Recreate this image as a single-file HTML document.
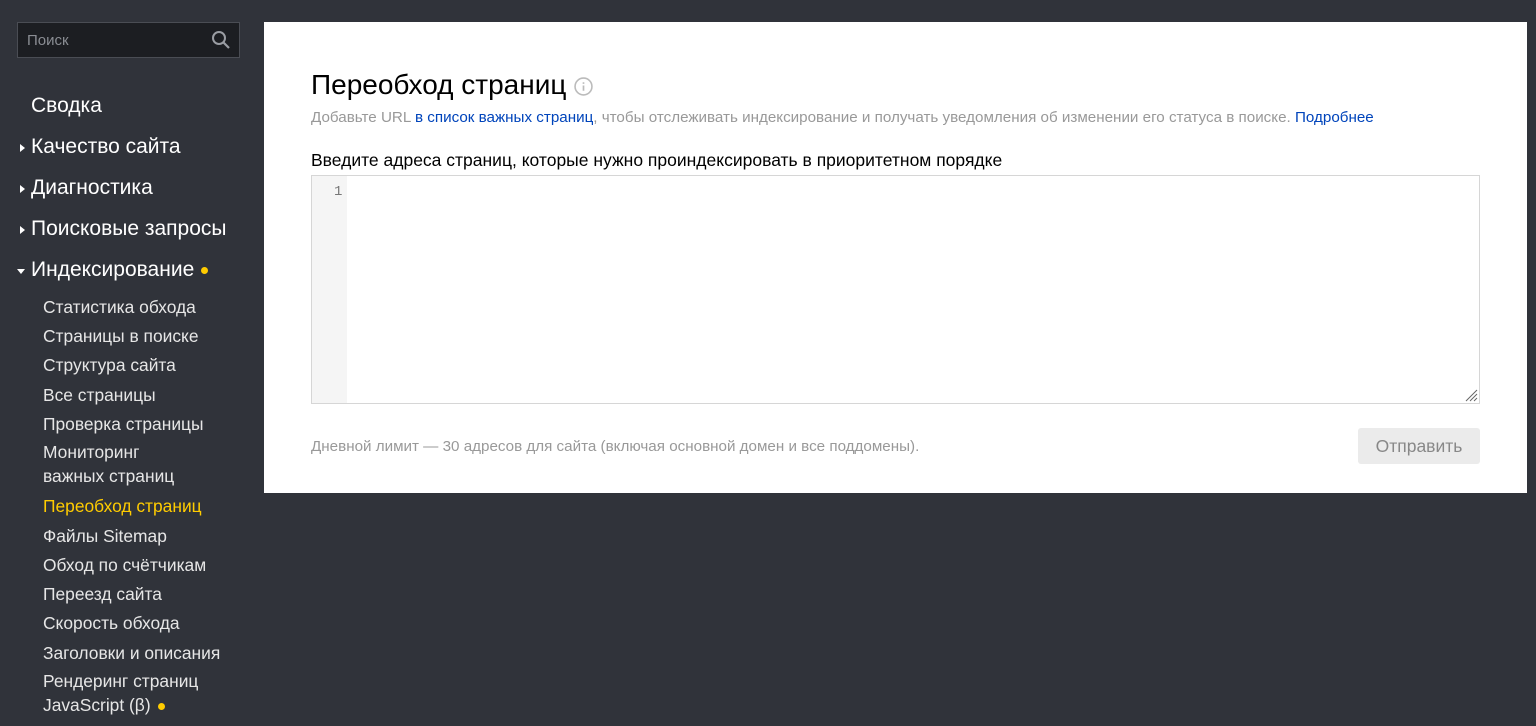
<!DOCTYPE html>
<html><head><meta charset="utf-8"><style>
body{margin:0;width:1536px;height:726px;background:#30333a;font-family:"Liberation Sans",sans-serif;position:relative;overflow:hidden}
.a{position:absolute;white-space:nowrap}
.search{left:17px;top:22px;width:221px;height:34px;background:#1c1e22;border:1px solid #4a4d54}
.m{color:#fff;font-size:21px;left:31px}
.s{color:#e6e6e6;font-size:17.4px;left:43px}
.tri{position:absolute;left:-11px;top:9px;width:0;height:0;border-top:4px solid transparent;border-bottom:4px solid transparent;border-left:5px solid #fff}
.dot{display:inline-block;width:7px;height:7px;border-radius:50%;background:#fc0;margin-left:7px;vertical-align:middle}
.card{left:264px;top:22px;width:1263px;height:471px;background:#fff}
</style></head><body>
<div class="a search"><span class="a" style="left:9px;top:9px;color:#8a8d93;font-size:15px">Поиск</span>
<svg class="a" style="left:193px;top:7px" width="20" height="20" viewBox="0 0 20 20"><circle cx="8" cy="8" r="6" fill="none" stroke="#9a9da3" stroke-width="2"/><path d="M12.5 12.5L18 18" stroke="#9a9da3" stroke-width="2.2"/></svg></div>
<div class="a m" style="top:94px">Сводка</div>
<div class="a m" style="top:135px"><i class="tri"></i>Качество сайта</div>
<div class="a m" style="top:176px"><i class="tri"></i>Диагностика</div>
<div class="a m" style="top:217px"><i class="tri"></i>Поисковые запросы</div>
<div class="a m" style="top:258px"><i class="tri" style="border-left:4px solid transparent;border-right:4px solid transparent;border-top:5px solid #fff;border-bottom:0;top:11px;left:-14px"></i>Индексирование<span class="dot"></span></div>
<div class="a s" style="top:297px">Статистика обхода</div>
<div class="a s" style="top:326px">Страницы в поиске</div>
<div class="a s" style="top:355px">Структура сайта</div>
<div class="a s" style="top:385px">Все страницы</div>
<div class="a s" style="top:414px">Проверка страницы</div>
<div class="a s" style="top:440px;line-height:24px">Мониторинг<br>важных страниц</div>
<div class="a s" style="top:496px;color:#fc0">Переобход страниц</div>
<div class="a s" style="top:526px">Файлы Sitemap</div>
<div class="a s" style="top:555px">Обход по счётчикам</div>
<div class="a s" style="top:584px">Переезд сайта</div>
<div class="a s" style="top:613px">Скорость обхода</div>
<div class="a s" style="top:643px">Заголовки и описания</div>
<div class="a s" style="top:669px;line-height:24px">Рендеринг страниц<br>JavaScript (β)<span class="dot"></span></div>
<div class="a card">
<div class="a" style="left:47px;top:47px;font-size:28px;color:#000">Переобход страниц <svg style="vertical-align:middle" width="19" height="19" viewBox="0 0 18 18"><circle cx="9" cy="9" r="8" fill="none" stroke="#bbb" stroke-width="1.5"/><path d="M9 8v5M9 5v1.5" stroke="#bbb" stroke-width="1.6"/></svg></div>
<div class="a" style="left:47px;top:87px;font-size:15.2px;color:#999">Добавьте URL <span style="color:#04b">в список важных страниц</span>, чтобы отслеживать индексирование и получать уведомления об изменении его статуса в поиске. <span style="color:#04b">Подробнее</span></div>
<div class="a" style="left:47px;top:128px;font-size:17.5px;color:#000">Введите адреса страниц, которые нужно проиндексировать в приоритетном порядке</div>
<div class="a" style="left:47px;top:153px;width:1167px;height:227px;border:1px solid #d6d6d6">
<div class="a" style="left:0;top:0;width:35px;height:227px;background:#f5f5f5"></div>
<div class="a" style="left:22px;top:8px;font-family:'Liberation Mono',monospace;font-size:14px;color:#777">1</div>
<svg class="a" style="right:1px;bottom:1px" width="14" height="14"><path d="M13 2L2 13M13 6L6 13M13 10L10 13" stroke="#666"/></svg>
</div>
<div class="a" style="left:47px;top:416px;font-size:15.2px;color:#999">Дневной лимит — 30 адресов для сайта (включая основной домен и все поддомены).</div>
<div class="a" style="left:1094px;top:406px;width:122px;height:36px;background:#ebebeb;border-radius:3px;color:#888;font-size:17.5px;text-align:center;line-height:36px">Отправить</div>
</div>
</body></html>
